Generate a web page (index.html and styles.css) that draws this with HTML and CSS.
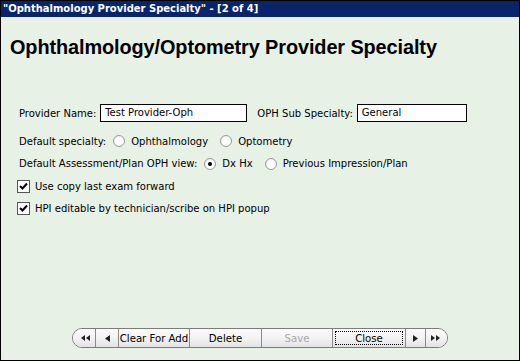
FILE: index.html
```html
<!DOCTYPE html>
<html>
<head>
<meta charset="utf-8">
<link rel="stylesheet" href="styles.css">
</head>
<body>
<div class="window">
  <div class="titlebar">"Ophthalmology Provider Specialty" - [2 of 4]</div>
  <div class="content">
    <h1 class="heading">Ophthalmology/Optometry Provider Specialty</h1>
    <div class="form">
      <div class="row">
        <span class="label">Provider Name:</span>
        <span class="textbox tb-name">Test Provider-Oph</span>
        <span class="label lbl-sub">OPH Sub Specialty:</span>
        <span class="textbox tb-sub">General</span>
      </div>
      <div class="row">
        <span class="label">Default specialty:</span>
        <span class="radio"></span><span class="opt">Ophthalmology</span>
        <span class="radio"></span><span class="opt">Optometry</span>
      </div>
      <div class="row">
        <span class="label">Default Assessment/Plan OPH view:</span>
        <span class="radio checked"></span><span class="opt">Dx Hx</span>
        <span class="radio"></span><span class="opt">Previous Impression/Plan</span>
      </div>
      <div class="row">
        <span class="checkbox"><svg width="9" height="9" viewBox="0 0 9 9"><path d="M1 4 L3.5 6.5 L8 1.5" fill="none" stroke="#000" stroke-width="2"/></svg></span>
        <span class="opt">Use copy last exam forward</span>
      </div>
      <div class="row">
        <span class="checkbox"><svg width="9" height="9" viewBox="0 0 9 9"><path d="M1 4 L3.5 6.5 L8 1.5" fill="none" stroke="#000" stroke-width="2"/></svg></span>
        <span class="opt">HPI editable by technician/scribe on HPI popup</span>
      </div>
    </div>
    <div class="toolbar">
      <span class="btn b-first"><svg width="9" height="6" viewBox="0 0 9 6"><path d="M4 0 L0 3 L4 6 Z M9 0 L5 3 L9 6 Z" fill="#222"/></svg></span>
      <span class="btn b-prev"><svg width="5" height="7" viewBox="0 0 5 7"><path d="M5 0 L0 3.5 L5 7 Z" fill="#222"/></svg></span>
      <span class="btn b-clear">Clear For Add</span>
      <span class="btn b-del">Delete</span>
      <span class="btn b-save">Save</span>
      <span class="btn b-close"><span class="focus">Close</span></span>
      <span class="btn b-next"><svg width="5" height="7" viewBox="0 0 5 7"><path d="M0 0 L5 3.5 L0 7 Z" fill="#222"/></svg></span>
      <span class="btn b-last"><svg width="9" height="6" viewBox="0 0 9 6"><path d="M0 0 L4 3 L0 6 Z M5 0 L9 3 L5 6 Z" fill="#222"/></svg></span>
    </div>
  </div>
</div>
</body>
</html>
```
FILE: styles.css
```css
html, body {
  margin: 0;
  padding: 0;
}
body {
  width: 520px;
  height: 361px;
  overflow: hidden;
  font-family: "DejaVu Sans Condensed", "Liberation Sans", sans-serif;
  font-size: 11.15px;
  color: #000;
}
.window {
  width: 520px;
  height: 361px;
  box-sizing: border-box;
  border: 1px solid #000;
  background: #e7f1e6;
  display: flex;
  flex-direction: column;
}
.titlebar {
  height: 16px;
  background: #0a246a;
  color: #fff;
  font-family: "DejaVu Sans Condensed", "Liberation Sans", sans-serif;
  font-weight: bold;
  font-size: 11.1px;
  line-height: 15px;
  padding-left: 2px;
  white-space: nowrap;
}
.content {
  flex: 1;
  display: flex;
  flex-direction: column;
  padding-left: 9px;
}
.heading {
  margin: 18px 0 0 0;
  font-family: "Liberation Sans", Arial, sans-serif;
  font-weight: bold;
  font-size: 19.9px;
  line-height: 24px;
  letter-spacing: -0.1px;
}
.form {
  margin-top: 45px;
  padding-left: 9px;
  display: flex;
  flex-direction: column;
  gap: 4.5px;
}
.row {
  display: flex;
  align-items: center;
  height: 18px;
  white-space: nowrap;
}
.row:nth-child(2) { margin-top: 5.5px; }
.label {
  margin-right: 4px;
}
.lbl-sub {
  margin-left: 10px;
}
.textbox {
  box-sizing: border-box;
  height: 18px;
  border: 1px solid #000;
  background: #fff;
  padding: 0 0 0 4px;
  line-height: 16px;
}
.tb-name { width: 147px; }
.tb-sub { width: 110px; }
.radio {
  box-sizing: border-box;
  width: 12px;
  height: 12px;
  border-radius: 50%;
  border: 1px solid #9a9a9a;
  background: radial-gradient(circle at 60% 60%, #ffffff 40%, #e4e4e4 100%);
  margin: 0 6px 0 3px;
  position: relative;
}
.radio.checked::after {
  content: "";
  position: absolute;
  left: 3px;
  top: 3px;
  width: 4px;
  height: 4px;
  border-radius: 50%;
  background: #000;
}
.opt {
  margin-right: 9px;
}
.checkbox {
  box-sizing: border-box;
  width: 13px;
  height: 13px;
  border: 1px solid #555;
  background: #fff;
  margin: 0 5px 0 -2px;
  display: flex;
  align-items: center;
  justify-content: center;
}
.checkbox svg { display: block; }
.toolbar {
  margin-top: auto;
  margin-bottom: 12px;
  align-self: center;
  margin-left: -9px;
  display: flex;
  height: 20px;
  box-sizing: border-box;
  border: 1px solid #7c7c7c;
  border-radius: 10px;
  overflow: hidden;
  background: #f4f4f4;
}
.btn {
  box-sizing: border-box;
  height: 18px;
  display: flex;
  align-items: center;
  justify-content: center;
  background: linear-gradient(#fbfbfb, #f3f3f3 50%, #e3e3e3);
  border-left: 1px solid #8a8a8a;
  font-family: "DejaVu Sans Condensed", "Liberation Sans", sans-serif;
  font-size: 11.3px;
}
.b-first { border-left: none; width: 22px; padding-left: 3px; }
.b-prev { width: 23px; }
.b-clear { width: 71px; }
.b-del { width: 72px; }
.b-save { width: 71px; color: #a8a8a8; }
.b-close { width: 73px; padding: 2px; }
.b-next { width: 20px; }
.b-last { width: 22px; padding-right: 3px; }
.focus {
  box-sizing: border-box;
  width: 100%;
  height: 100%;
  border: 1px dotted #000;
  display: flex;
  align-items: center;
  justify-content: center;
}
```
